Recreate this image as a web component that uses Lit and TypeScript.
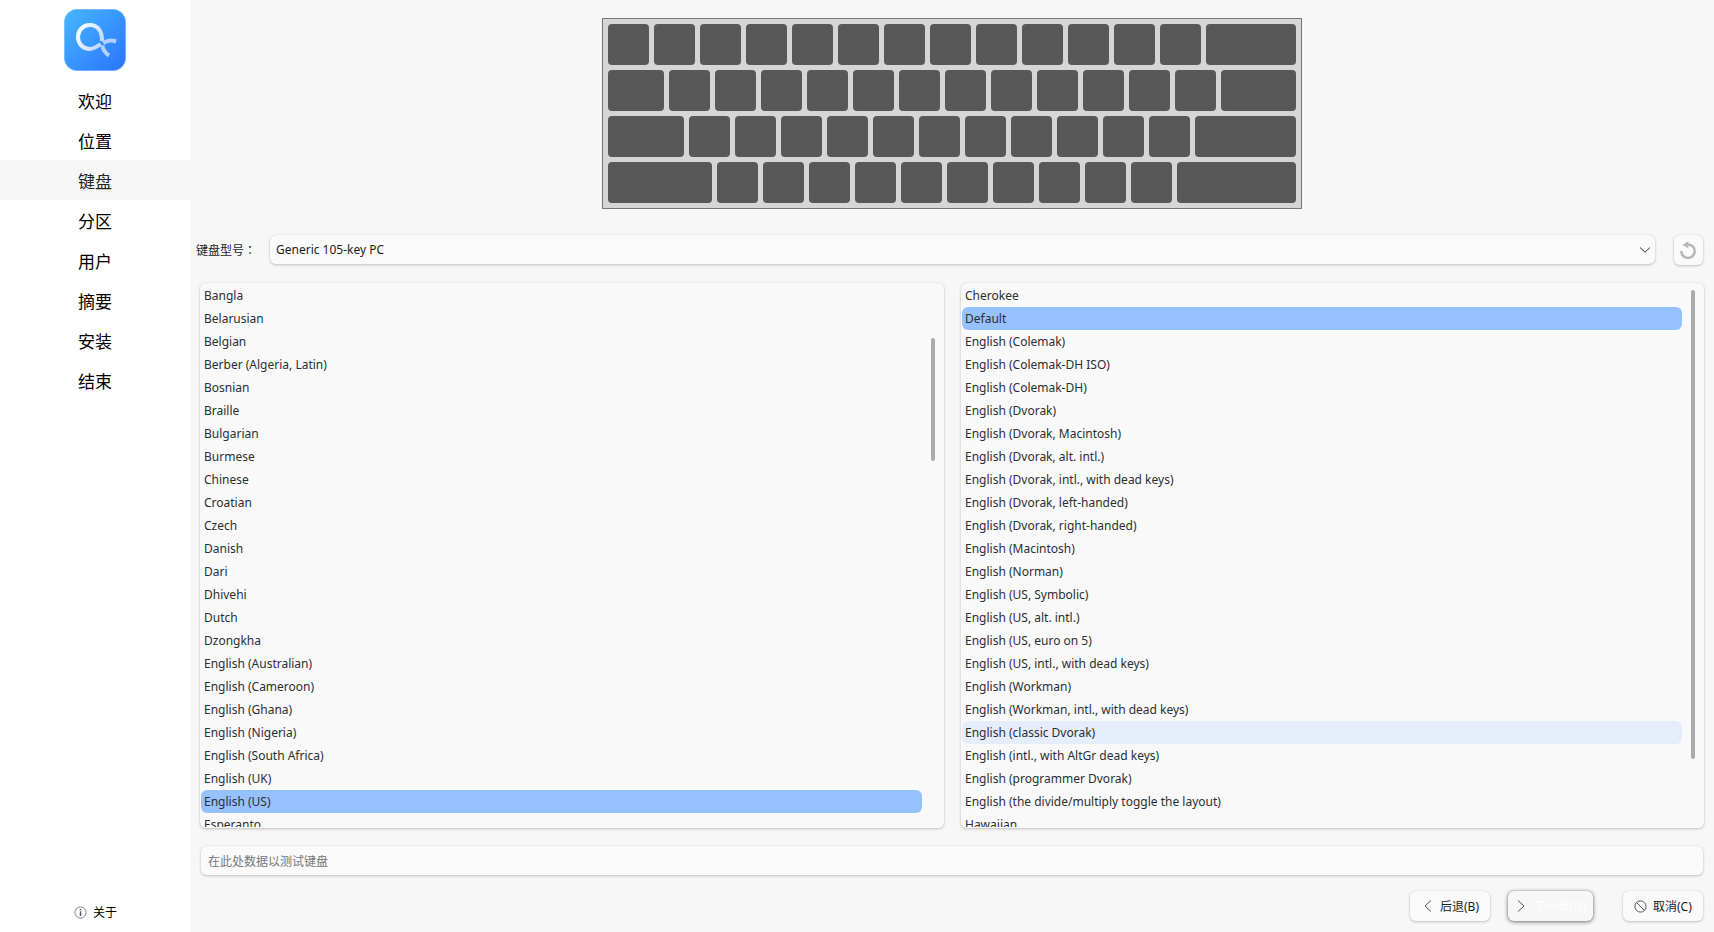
import { LitElement, html, css, svg } from "lit";
import { customElement, property, state } from "lit/decorators.js";
import { classMap } from "lit/directives/class-map.js";
import { styleMap } from "lit/directives/style-map.js";

const STEPS = ["欢迎", "位置", "键盘", "分区", "用户", "摘要", "安装", "结束"];

const LAYOUTS = [
  "Bangla", "Belarusian", "Belgian", "Berber (Algeria, Latin)", "Bosnian", "Braille",
  "Bulgarian", "Burmese", "Chinese", "Croatian", "Czech", "Danish", "Dari", "Dhivehi",
  "Dutch", "Dzongkha", "English (Australian)", "English (Cameroon)", "English (Ghana)",
  "English (Nigeria)", "English (South Africa)", "English (UK)", "English (US)", "Esperanto",
];

const VARIANTS = [
  "Cherokee", "Default", "English (Colemak)", "English (Colemak-DH ISO)", "English (Colemak-DH)",
  "English (Dvorak)", "English (Dvorak, Macintosh)", "English (Dvorak, alt. intl.)",
  "English (Dvorak, intl., with dead keys)", "English (Dvorak, left-handed)",
  "English (Dvorak, right-handed)", "English (Macintosh)", "English (Norman)",
  "English (US, Symbolic)", "English (US, alt. intl.)", "English (US, euro on 5)",
  "English (US, intl., with dead keys)", "English (Workman)",
  "English (Workman, intl., with dead keys)", "English (classic Dvorak)",
  "English (intl., with AltGr dead keys)", "English (programmer Dvorak)",
  "English (the divide/multiply toggle the layout)", "Hawaiian",
];

@customElement("keyboard-preview")
export class KeyboardPreview extends LitElement {
  static styles = css`
    :host {
      display: grid;
      gap: 5px;
      box-sizing: border-box;
      width: 700px;
      padding: 5px;
      border: 1px solid #777;
      background: #d6d6d6;
    }
    .row {
      display: flex;
      gap: 5px;
    }
    .key {
      width: 41px;
      height: 41px;
      border-radius: 4px;
      background: #585858;
      flex: none;
    }
    .key:last-child {
      flex: 1;
    }
  `;

  // [width of the leading key, number of regular keys that follow it]
  private rows = [[41, 12], [56, 12], [76, 11], [104, 10]];

  render() {
    return this.rows.map(
      ([lead, count]) => html`<div class="row">
        <div class="key" style=${styleMap({ width: `${lead}px` })}></div>
        ${Array.from({ length: count }, () => html`<div class="key"></div>`)}
        <div class="key"></div>
      </div>`
    );
  }
}

@customElement("option-list")
export class OptionList extends LitElement {
  static styles = css`
    :host {
      display: flex;
      box-sizing: border-box;
      height: 545px;
      padding: 1px;
      overflow: hidden;
      border-radius: 6px;
      background: #f9f9f9;
      box-shadow: 0 1px 3px rgba(0, 0, 0, 0.22), 0 0 2px rgba(0, 0, 0, 0.06);
    }
    .items {
      flex: 1;
      overflow: hidden;
    }
    .item {
      height: 23px;
      padding-left: 3px;
      line-height: 23px;
      border-radius: 6px;
      color: #2b2f33;
      white-space: nowrap;
    }
    .selected {
      background: #96c1ff;
    }
    .hovered {
      background: #e5edfa;
    }
    .track {
      flex: none;
      width: 21px;
      box-sizing: border-box;
      padding-left: 9px;
    }
    .thumb {
      width: 4px;
      border-radius: 2px;
      background: #ababab;
    }
  `;

  @property({ attribute: false }) items: string[] = [];
  @property() selected = "";
  @property() hovered = "";
  @property({ type: Number }) thumbTop = 0;
  @property({ type: Number }) thumbSize = 0;

  render() {
    return html`
      <div class="items">
        ${this.items.map(
          (t) => html`<div
            class=${classMap({ item: true, selected: t === this.selected, hovered: t === this.hovered })}
          >${t}</div>`
        )}
      </div>
      <div class="track">
        <div
          class="thumb"
          style=${styleMap({ marginTop: `${this.thumbTop}px`, height: `${this.thumbSize}px` })}
        ></div>
      </div>
    `;
  }
}

const logo = svg`
  <defs>
    <linearGradient id="bg" x1="0" y1="0" x2="1" y2="1">
      <stop offset="0" stop-color="#45b8ff"/><stop offset="1" stop-color="#2a73ff"/>
    </linearGradient>
    <linearGradient id="ring" x1="0" y1="0" x2="1" y2="0.6">
      <stop offset="0" stop-color="#fff"/><stop offset="1" stop-color="#c3dcff"/>
    </linearGradient>
  </defs>
  <rect x="0.3" y="0.3" width="61.4" height="61.4" rx="13" fill="url(#bg)" stroke="#7db9ff" stroke-width="0.7"/>
  <g fill="none" stroke-width="4">
    <path d="M38 32C38.300 24 35 16 25.700 16C19 16 14 21.300 14 28C14 34.700 19 40 25.700 40C29.500 40 33.500 37.300 36.600 35" stroke="url(#ring)"/>
    <path d="M39.300 34C42.500 31.800 47.500 31 52 32.500" stroke="#b3d0ff"/>
    <path d="M38.200 36.300C39 40.500 41.500 44 45 46.500" stroke="#b3d0ff"/>
  </g>`;

@customElement("app-root")
export class AppRoot extends LitElement {
  static styles = css`
    :host {
      display: flex;
      width: 1714px;
      height: 932px;
      overflow: hidden;
      background: #f7f7f7;
      color: #1b1d1f;
      font: 12px/16px "Noto Sans", "Noto Sans CJK SC", sans-serif;
    }
    .sidebar {
      display: flex;
      flex-direction: column;
      width: 190px;
      flex: none;
      background: #fff;
      color: #000;
    }
    .logo {
      display: block;
      margin: 9px auto;
    }
    .step {
      height: 40px;
      line-height: 42px;
      font-size: 17px;
      text-align: center;
      font-family: "Noto Sans CJK SC", sans-serif;
    }
    .current {
      background: #f7f7f7;
      color: #232629;
    }
    .about {
      display: flex;
      align-items: center;
      justify-content: center;
      gap: 6px;
      margin-top: auto;
      height: 40px;
      padding-left: 1px;
    }
    .about span,
    .test span,
    .button span {
      padding-top: 2px;
    }
    .main {
      display: flex;
      flex-direction: column;
      flex: 1;
      padding: 18px 10px 11px;
    }
    .preview {
      margin-left: 402px;
    }
    .model {
      display: flex;
      align-items: center;
      height: 30px;
      margin: 26px 1px 0 -4px;
    }
    .label {
      width: 74px;
    }
    .colon {
      font-family: "Noto Sans CJK TC", sans-serif;
    }
    .box {
      display: flex;
      align-items: center;
      box-sizing: border-box;
      border-radius: 6px;
      background: #fafafa;
      box-shadow: 0 1px 3px rgba(0, 0, 0, 0.22), 0 0 2px rgba(0, 0, 0, 0.06);
    }
    .combo {
      flex: 1;
      height: 29px;
      margin-bottom: 1px;
      padding: 0 4px 0 6px;
      justify-content: space-between;
    }
    .reset {
      width: 29px;
      height: 30px;
      margin-left: 19px;
      justify-content: center;
    }
    .lists {
      display: grid;
      grid-template-columns: 744px 743px;
      gap: 17px;
      margin-top: 18px;
    }
    .test {
      height: 29px;
      margin: 18px 1px 0;
      padding-left: 7px;
      color: #73777b;
    }
    .actions {
      display: flex;
      justify-content: flex-end;
      margin: auto 1px 0;
    }
    .button {
      height: 30px;
      width: 80px;
      padding-left: 12px;
      gap: 6px;
      white-space: nowrap;
    }
    .cancel {
      padding-left: 11px;
    }
    .next {
      width: 85px;
      margin: 0 30px 0 18px;
      padding-left: 7px;
      gap: 7px;
      background: #f7f7f7;
      color: #fff;
      box-shadow: 0 1px 4px rgba(0, 0, 0, 0.5), 0 0 2px rgba(0, 0, 0, 0.25);
    }
    .icon {
      flex: none;
      fill: none;
    }
  `;

  @state() private step = 2;

  render() {
    return html`
      <nav class="sidebar">
        <svg class="logo" width="62" height="62" viewBox="0 0 62 62">${logo}</svg>
        ${STEPS.map((s, i) => html`<div class=${classMap({ step: true, current: i === this.step })}>${s}</div>`)}
        <div class="about">
          <svg class="icon" width="13" height="13" viewBox="0 0 13 13">
            <circle cx="6.500" cy="6.500" r="5.600" stroke="#777" stroke-width="0.900"/>
            <path d="M6.500 3V4.300M6.500 5.200V10" stroke="#555" stroke-width="1.500"/>
          </svg>
          <span>关于</span>
        </div>
      </nav>
      <main class="main">
        <keyboard-preview class="preview"></keyboard-preview>
        <div class="model">
          <div class="label">键盘型号<span class="colon" lang="zh-TW">：</span></div>
          <div class="box combo">
            <span>Generic 105-key PC</span>
            <svg class="icon" width="12" height="8" viewBox="0 0 12 8">
              <path d="M1 1.500L6 6.200L11 1.500" stroke="#333"/>
            </svg>
          </div>
          <div class="box reset">
            <svg class="icon" width="17" height="18" viewBox="0 0 17 18">
              <path d="M1.300 10A6.700 6.700 0 1 0 8 3.500H6" stroke="#b8b8b8" stroke-width="2.500"/>
              <path d="M8.300 0.200V7.200L2.300 3.900Z" fill="#b8b8b8"/>
            </svg>
          </div>
        </div>
        <div class="lists">
          <option-list .items=${LAYOUTS} selected="English (US)" .thumbTop=${54} .thumbSize=${123}></option-list>
          <option-list .items=${VARIANTS} selected="Default" hovered="English (classic Dvorak)"
            .thumbTop=${6} .thumbSize=${469}></option-list>
        </div>
        <div class="box test"><span>在此处数据以测试键盘</span></div>
        <div class="actions">
          <div class="box button">
            <svg class="icon" width="12" height="14" viewBox="0 0 12 14">
              <path d="M9 1.500L3 7L9 12.500" stroke="#555"/>
            </svg>
            <span>后退(B)</span>
          </div>
          <div class="box button next">
            <svg class="icon" width="12" height="14" viewBox="0 0 12 14">
              <path d="M3 1.500L9 7L3 12.500" stroke="#555"/>
            </svg>
            <span>下一步(N)</span>
          </div>
          <div class="box button cancel">
            <svg class="icon" width="13" height="13" viewBox="0 0 13 13">
              <circle cx="6.500" cy="6.500" r="5.600" stroke="#555"/>
              <path d="M2.600 2.600L10.400 10.400" stroke="#555"/>
            </svg>
            <span>取消(C)</span>
          </div>
        </div>
      </main>
    `;
  }
}
